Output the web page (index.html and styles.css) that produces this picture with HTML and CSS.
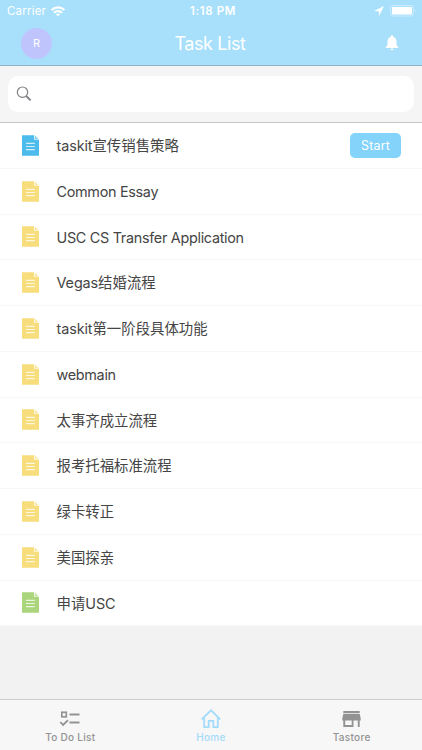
FILE: index.html
```html
<!DOCTYPE html>
<html lang="en">
  <head>
    <meta charset="UTF-8" />
    <meta name="viewport" content="width=device-width, initial-scale=1.0" />
    <title>Task List</title>
    <link rel="stylesheet" href="styles.css">
  </head>
  <body>
    <svg class="sprite">
      <symbol id="doc" viewBox="0 0 17 21">
        <path d="M0 0.3H12.2V4.8H17V20.7H0Z" fill="currentColor" />
        <path d="M13 0.6L16.6 4.2H13Z" fill="currentColor" fill-opacity="0.7" />
        <path d="M4 8.4H12.8M4 11.5H12.8M4 14.6H12.8" stroke="#fff" stroke-opacity="0.75" stroke-width="1.1" />
      </symbol>
    </svg>

    <header class="header">
      <div class="status-bar">
        <div class="status-left">
          <span>Carrier</span>
          <svg width="14" height="11" viewBox="0 0 14 11" fill="none" stroke="#fff" stroke-width="2.1">
            <path d="M0.7 4.1C4.3 0.5 9.7 0.5 13.3 4.1" />
            <path d="M3 6.7C5.2 4.6 8.8 4.6 11 6.7" />
            <path d="M7 10.4L4.9 8.3C6.1 7.3 7.9 7.3 9.1 8.3Z" fill="#fff" stroke="none" />
          </svg>
        </div>
        <span class="clock">1:18 PM</span>
        <div class="status-right">
          <svg width="10" height="10" viewBox="0 0 10 10"><path d="M0 5L10 0L5 10L4.8 5.2Z" fill="#fff" /></svg>
          <svg width="26" height="12" viewBox="0 0 26 12">
            <rect x="0.5" y="0.5" width="23" height="10.5" rx="2.5" fill="none" stroke="#fff" stroke-opacity="0.4" />
            <rect x="2" y="2" width="20" height="7.5" rx="1" fill="#fff" />
            <path d="M24.7 4C25.8 4.5 25.8 7 24.7 7.5Z" fill="#fff" fill-opacity="0.4" />
          </svg>
        </div>
      </div>
      <div class="nav-bar">
        <div class="avatar">R</div>
        <h1 class="title">Task List</h1>
        <svg class="bell" width="14" height="16" viewBox="0 0 14 16" fill="#fff">
          <path d="M7 0.3C7.8 0.3 8.2 0.9 8.2 1.7C10.5 2.3 11.5 4.2 11.5 6.5V10.3L13.3 12.2V13H0.7V12.2L2.5 10.3V6.5C2.5 4.2 3.5 2.3 5.8 1.7C5.8 0.9 6.2 0.3 7 0.3Z" />
          <path d="M5.4 13.8H8.6C8.4 15.7 5.6 15.7 5.4 13.8Z" />
        </svg>
      </div>
    </header>

    <div class="search">
      <div class="search-box">
        <svg width="16" height="16" viewBox="0 0 16 16" fill="none" stroke="#808086">
          <circle cx="6.5" cy="6.2" r="5.2" stroke-width="1.2" />
          <path d="M10.2 10L14.6 14.4" stroke-width="1.8" />
        </svg>
      </div>
    </div>

    <ul class="tasks">
      <li class="task"><svg class="doc blue"><use href="#doc" /></svg><span class="name"><span class="latin">taskit</span>宣传销售策略</span><button class="start">Start</button></li>
      <li class="task"><svg class="doc"><use href="#doc" /></svg><span class="name latin">Common Essay</span></li>
      <li class="task"><svg class="doc"><use href="#doc" /></svg><span class="name latin">USC CS Transfer Application</span></li>
      <li class="task"><svg class="doc"><use href="#doc" /></svg><span class="name"><span class="latin">Vegas</span>结婚流程</span></li>
      <li class="task"><svg class="doc"><use href="#doc" /></svg><span class="name"><span class="latin">taskit</span>第一阶段具体功能</span></li>
      <li class="task"><svg class="doc"><use href="#doc" /></svg><span class="name latin">webmain</span></li>
      <li class="task"><svg class="doc"><use href="#doc" /></svg><span class="name">太事齐成立流程</span></li>
      <li class="task"><svg class="doc"><use href="#doc" /></svg><span class="name">报考托福标准流程</span></li>
      <li class="task"><svg class="doc"><use href="#doc" /></svg><span class="name">绿卡转正</span></li>
      <li class="task"><svg class="doc"><use href="#doc" /></svg><span class="name">美国探亲</span></li>
      <li class="task"><svg class="doc green"><use href="#doc" /></svg><span class="name">申请<span class="latin">USC</span></span></li>
    </ul>

    <nav class="tabs">
      <div class="tab">
        <svg width="22" height="22" viewBox="0 0 22 22" fill="none" stroke="currentColor">
          <rect x="2.8" y="4.3" width="4.5" height="4.5" stroke-width="1.7" />
          <path d="M10.5 6.5H20.5M10.5 14.5H20.5" stroke-width="2" />
          <path d="M1.3 14.2L4.1 17L9 12.1" stroke-width="1.8" />
        </svg>
        <span>To Do List</span>
      </div>
      <div class="tab active">
        <svg width="22" height="22" viewBox="0 0 22 22" fill="none" stroke="currentColor" stroke-width="1.8">
          <path d="M1.7 11.3L11 2.3L20.3 11.3" />
          <path d="M4.2 9.5V19.2H8.7V12.8H13.3V19.2H17.8V9.5" />
        </svg>
        <span>Home</span>
      </div>
      <div class="tab">
        <svg width="22" height="22" viewBox="0 0 22 22" fill="currentColor">
          <path d="M2.3 3H18.7V5H2.3Z" />
          <path fill-rule="evenodd" d="M2.3 5.8H18.7L19.7 10.5V12.6H18.7V19H16.8V12.6H12.5V19H2.3V12.6H1.3V10.5ZM4.2 12.6V17.1H10.7V12.6Z" />
        </svg>
        <span>Tastore</span>
      </div>
    </nav>
  </body>
</html>
```

FILE: styles.css
```css
* {
  box-sizing: border-box;
}
body {
  margin: 0;
  height: 750px;
  display: flex;
  flex-direction: column;
  overflow: hidden;
  background-color: #f2f2f2;
  font-family: Inter, "Noto Sans CJK SC", sans-serif;
  color: #454545;
}
svg {
  display: block;
  flex: none;
}
.sprite {
  position: absolute;
  width: 0;
  height: 0;
}
.header {
  height: 66px;
  background-color: #a8e0fc;
  border-bottom: 1px solid #8db5c9;
  color: #fff;
}
.status-bar {
  height: 21px;
  padding: 1px 6px 0 7px;
  display: grid;
  grid-template-columns: 1fr auto 1fr;
  align-items: center;
  font-size: 11.5px;
  letter-spacing: 0.2px;
}
.status-left {
  display: flex;
  align-items: center;
  gap: 5px;
}
.clock {
  padding-left: 3px;
  font-weight: 600;
  letter-spacing: 0.6px;
}
.status-right {
  display: flex;
  align-items: center;
  justify-content: flex-end;
  gap: 6px;
}
.nav-bar {
  height: 44px;
  padding: 0 23px 0 21px;
  display: grid;
  grid-template-columns: 1fr auto 1fr;
  align-items: center;
}
.avatar {
  width: 31px;
  height: 31px;
  border-radius: 50%;
  background-color: #bfc5fc;
  font-size: 11px;
  line-height: 31px;
  text-align: center;
}
.title {
  margin: 0;
  font-size: 18px;
  font-weight: 400;
  letter-spacing: -0.4px;
}
.bell {
  justify-self: end;
}
.search {
  height: 57px;
  padding: 10px 8px;
  background-color: #f5f5f5;
  border-bottom: 1px solid #c6c6c6;
}
.search-box {
  height: 36px;
  padding-left: 8px;
  display: flex;
  align-items: center;
  border-radius: 10px;
  background-color: #fff;
}
.tasks {
  margin: 0;
  padding: 0;
  list-style: none;
}
.task {
  height: 45.75px;
  padding: 0 21px 0 22px;
  display: flex;
  align-items: center;
  background-color: #fff;
  border-bottom: 1px solid #f8f8f8;
}
.doc {
  width: 17px;
  height: 21px;
  margin-right: 17.5px;
  color: #f7dd7c;
}
.blue {
  color: #4dbcec;
}
.green {
  color: #aad57c;
}
.name {
  flex: 1;
  padding-top: 1.5px;
  font-size: 14.4px;
  line-height: 20px;
}
.latin {
  letter-spacing: -0.3px;
}
.name .latin {
  letter-spacing: -0.1px;
}
.start {
  width: 51px;
  height: 25px;
  padding: 0;
  border: none;
  border-radius: 5px;
  background-color: #83d3fa;
  color: #fff;
  font: 12.5px Inter, sans-serif;
  letter-spacing: 0.15px;
}
.tabs {
  height: 51px;
  margin-top: auto;
  padding-top: 8px;
  display: flex;
  background-color: #f7f7f7;
  border-top: 1px solid #cfcfcf;
  font-size: 10px;
  line-height: 14px;
  font-weight: 500;
  letter-spacing: 0.3px;
  color: #939393;
}
.tab {
  flex: 1;
  display: flex;
  flex-direction: column;
  align-items: center;
}
.active {
  color: #a3dbfa;
}
```
